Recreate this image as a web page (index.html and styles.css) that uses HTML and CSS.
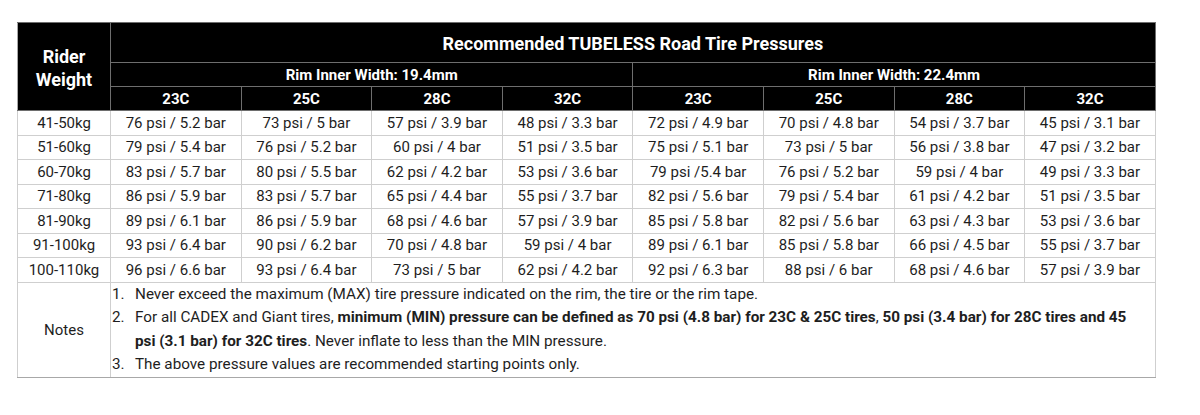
FILE: index.html
```html
<!DOCTYPE html>
<html>
<head>
<meta charset="utf-8">
<link rel="stylesheet" href="styles.css">
</head>
<body>
<table class="tp">
  <colgroup>
    <col class="c-w">
    <col class="c-d"><col class="c-d"><col class="c-d"><col class="c-d">
    <col class="c-d"><col class="c-d"><col class="c-d"><col class="c-d">
  </colgroup>
  <thead>
    <tr class="r-title">
      <th rowspan="3" class="rider">Rider<br>Weight</th>
      <th colspan="8" class="title">Recommended TUBELESS Road Tire Pressures</th>
    </tr>
    <tr class="r-rim">
      <th colspan="4">Rim Inner Width: 19.4mm</th>
      <th colspan="4">Rim Inner Width: 22.4mm</th>
    </tr>
    <tr class="r-size">
      <th>23C</th><th>25C</th><th>28C</th><th>32C</th>
      <th>23C</th><th>25C</th><th>28C</th><th>32C</th>
    </tr>
  </thead>
  <tbody>
    <tr class="r-data"><td>41-50kg</td><td>76 psi / 5.2 bar</td><td>73 psi / 5 bar</td><td>57 psi / 3.9 bar</td><td>48 psi / 3.3 bar</td><td>72 psi / 4.9 bar</td><td>70 psi / 4.8 bar</td><td>54 psi / 3.7 bar</td><td>45 psi / 3.1 bar</td></tr>
    <tr class="r-data"><td>51-60kg</td><td>79 psi / 5.4 bar</td><td>76 psi / 5.2 bar</td><td>60 psi / 4 bar</td><td>51 psi / 3.5 bar</td><td>75 psi / 5.1 bar</td><td>73 psi / 5 bar</td><td>56 psi / 3.8 bar</td><td>47 psi / 3.2 bar</td></tr>
    <tr class="r-data"><td>60-70kg</td><td>83 psi / 5.7 bar</td><td>80 psi / 5.5 bar</td><td>62 psi / 4.2 bar</td><td>53 psi / 3.6 bar</td><td>79 psi /5.4 bar</td><td>76 psi / 5.2 bar</td><td>59 psi / 4 bar</td><td>49 psi / 3.3 bar</td></tr>
    <tr class="r-data"><td>71-80kg</td><td>86 psi / 5.9 bar</td><td>83 psi / 5.7 bar</td><td>65 psi / 4.4 bar</td><td>55 psi / 3.7 bar</td><td>82 psi / 5.6 bar</td><td>79 psi / 5.4 bar</td><td>61 psi / 4.2 bar</td><td>51 psi / 3.5 bar</td></tr>
    <tr class="r-data"><td>81-90kg</td><td>89 psi / 6.1 bar</td><td>86 psi / 5.9 bar</td><td>68 psi / 4.6 bar</td><td>57 psi / 3.9 bar</td><td>85 psi / 5.8 bar</td><td>82 psi / 5.6 bar</td><td>63 psi / 4.3 bar</td><td>53 psi / 3.6 bar</td></tr>
    <tr class="r-data"><td>91-100kg</td><td>93 psi / 6.4 bar</td><td>90 psi / 6.2 bar</td><td>70 psi / 4.8 bar</td><td>59 psi / 4 bar</td><td>89 psi / 6.1 bar</td><td>85 psi / 5.8 bar</td><td>66 psi / 4.5 bar</td><td>55 psi / 3.7 bar</td></tr>
    <tr class="r-data"><td>100-110kg</td><td>96 psi / 6.6 bar</td><td>93 psi / 6.4 bar</td><td>73 psi / 5 bar</td><td>62 psi / 4.2 bar</td><td>92 psi / 6.3 bar</td><td>88 psi / 6 bar</td><td>68 psi / 4.6 bar</td><td>57 psi / 3.9 bar</td></tr>
    <tr class="r-notes">
      <td>Notes</td>
      <td colspan="8" class="notes">
        <ol class="note-list">
          <li><span class="num">1.</span><span class="txt">Never exceed the maximum (MAX) tire pressure indicated on the rim, the tire or the rim tape.</span></li>
          <li><span class="num">2.</span><span class="txt">For all CADEX and Giant tires, <b>minimum (MIN) pressure can be defined as 70 psi (4.8 bar) for 23C &amp; 25C tires</b>, <b>50 psi (3.4 bar) for 28C tires and 45 psi (3.1 bar) for 32C tires</b>. Never inflate to less than the MIN pressure.</span></li>
          <li><span class="num">3.</span><span class="txt">The above pressure values are recommended starting points only.</span></li>
        </ol>
      </td>
    </tr>
  </tbody>
</table>
</body>
</html>
```
FILE: styles.css
```css
html, body {
  margin: 0;
  padding: 0;
  background: #fff;
}
body {
  font-family: Roboto, "Liberation Sans", sans-serif;
  color: #1e1e1e;
}
.tp {
  margin: 22px 0 0 17px;
  border-collapse: collapse;
  table-layout: fixed;
  width: 1138px;
  border: 1px solid #a8a8a8;
}
.c-w { width: 93px; }
.c-d { width: 130.6px; }
.tp th {
  background: #000;
  color: #fff;
  font-weight: 700;
  border: 1px solid #6e6e6e;
  padding: 0;
  text-align: center;
  vertical-align: middle;
}
.tp .rider {
  font-size: 18px;
  line-height: 23px;
  border-left-color: #a8a8a8;
  padding-top: 2px;
}
.r-title { height: 40px; }
.r-title .title {
  font-size: 18px;
  padding-top: 1px;
}
.r-rim { height: 24px; }
.r-rim th { font-size: 15px; }
.r-size { height: 24px; }
.r-size th { font-size: 15px; }
.tp td {
  border: 1px solid #cfcfcf;
  padding: 0;
  text-align: center;
  vertical-align: middle;
  font-size: 15px;
}
.r-data { height: 24.5px; }
.r-notes td:first-child {
  border-bottom-color: #a8a8a8;
}
.tp td.notes {
  text-align: left;
  padding: 0;
  font-size: 15.25px;
  border-bottom-color: #a8a8a8;
}
.note-list {
  list-style: none;
  margin: 0;
  padding: 0;
}
.note-list li {
  display: flex;
  line-height: 23.5px;
}
.note-list .num {
  flex: none;
  width: 23px;
  padding-left: 1px;
}
.note-list .txt {
  flex: 1;
  padding-right: 8px;
}
.note-list b { font-weight: 700; }
```
